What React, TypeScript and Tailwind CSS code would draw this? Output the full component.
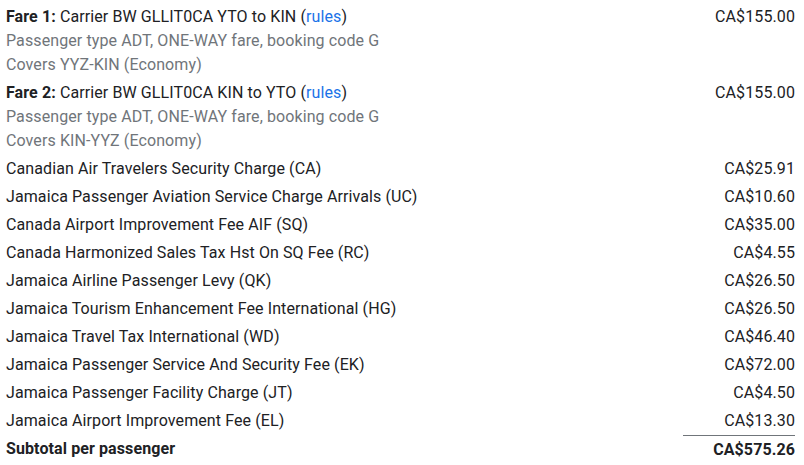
import React from 'react';

const FARES = [
  { n: 1, text: 'Carrier BW GLLIT0CA YTO to KIN', covers: 'Covers YYZ-KIN (Economy)', amount: 'CA$155.00' },
  { n: 2, text: 'Carrier BW GLLIT0CA KIN to YTO', covers: 'Covers KIN-YYZ (Economy)', amount: 'CA$155.00' },
];

const TAXES: [string, string][] = [
  ['Canadian Air Travelers Security Charge (CA)', 'CA$25.91'],
  ['Jamaica Passenger Aviation Service Charge Arrivals (UC)', 'CA$10.60'],
  ['Canada Airport Improvement Fee AIF (SQ)', 'CA$35.00'],
  ['Canada Harmonized Sales Tax Hst On SQ Fee (RC)', 'CA$4.55'],
  ['Jamaica Airline Passenger Levy (QK)', 'CA$26.50'],
  ['Jamaica Tourism Enhancement Fee International (HG)', 'CA$26.50'],
  ['Jamaica Travel Tax International (WD)', 'CA$46.40'],
  ['Jamaica Passenger Service And Security Fee (EK)', 'CA$72.00'],
  ['Jamaica Passenger Facility Charge (JT)', 'CA$4.50'],
  ['Jamaica Airport Improvement Fee (EL)', 'CA$13.30'],
];

export default function App() {
  return (
    <div className="w-[804px] h-[465px] bg-white overflow-hidden pt-[3px] pl-[6px] pr-[9px] text-[16px] leading-[24px] tracking-[0.1px] text-[#202124] font-['Roboto',sans-serif]">
      {FARES.map((f) => (
        <div key={f.n} className="flex justify-between py-[2px]">
          <div>
            <div>
              <span className="font-bold">Fare {f.n}:</span> {f.text} (
              <a className="text-[#1a73e8]">rules</a>)
            </div>
            <div className="text-[#70757a]">Passenger type ADT, ONE-WAY fare, booking code G</div>
            <div className="text-[#70757a]">{f.covers}</div>
          </div>
          <div className="text-right">{f.amount}</div>
        </div>
      ))}
      {TAXES.map(([label, amount]) => (
        <div key={label} className="flex justify-between py-[2px]">
          <div>{label}</div>
          <div className="text-right">{amount}</div>
        </div>
      ))}
      <div className="flex justify-between font-bold">
        <div className="py-[2px]">Subtotal per passenger</div>
        <div className="w-[112px] text-right border-t border-[#70757a] py-[2px]">CA$575.26</div>
      </div>
    </div>
  );
}
